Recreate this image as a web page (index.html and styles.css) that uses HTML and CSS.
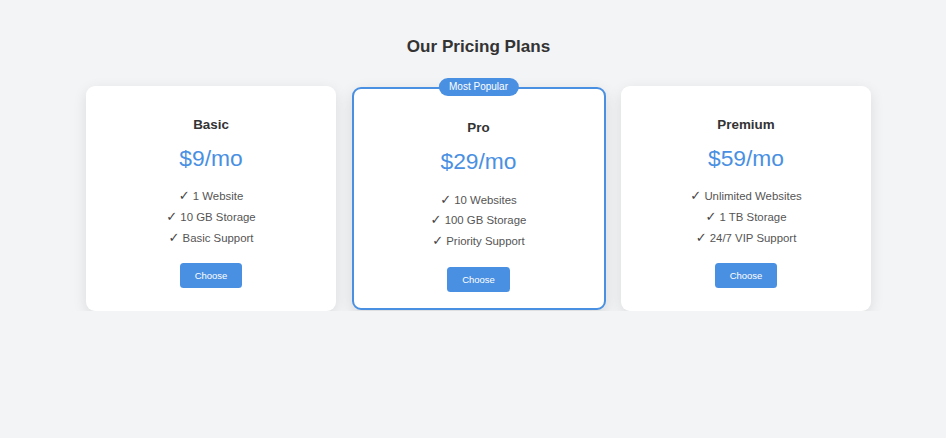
FILE: index.html
```html
<!DOCTYPE html>
<html lang="en">
<head>
  <meta charset="UTF-8">
  <meta name="viewport" content="width=device-width, initial-scale=1.0">
  <title>Our Pricing Plans</title>
  <link rel="stylesheet" href="styles.css">
</head>
<body>

<div class="container">
  <h2>Our Pricing Plans</h2>

  <div class="plans">
    <!-- Basic -->
    <div class="card">
      <h3>Basic</h3>
      <p class="price">$9/mo</p>
      <ul class="features">
        <li><span class="check">✓</span> 1 Website</li>
        <li><span class="check">✓</span> 10 GB Storage</li>
        <li><span class="check">✓</span> Basic Support</li>
      </ul>
      <button class="choose-button">Choose</button>
    </div>

    <!-- Pro -->
    <div class="card popular">
      <span class="badge">Most Popular</span>
      <h3>Pro</h3>
      <p class="price">$29/mo</p>
      <ul class="features">
        <li><span class="check">✓</span> 10 Websites</li>
        <li><span class="check">✓</span> 100 GB Storage</li>
        <li><span class="check">✓</span> Priority Support</li>
      </ul>
      <button class="choose-button">Choose</button>
    </div>

    <!-- Premium -->
    <div class="card">
      <h3>Premium</h3>
      <p class="price">$59/mo</p>
      <ul class="features">
        <li><span class="check">✓</span> Unlimited Websites</li>
        <li><span class="check">✓</span> 1 TB Storage</li>
        <li><span class="check">✓</span> 24/7 VIP Support</li>
      </ul>
      <button class="choose-button">Choose</button>
    </div>
  </div>
</div>

</body>
</html>
```

FILE: styles.css
```css
body {
  font-family: "Liberation Sans", Arial, sans-serif;
  font-size: 11.4px;
  margin: 0;
  padding: 0 0 0 11px;
  background-color: #f3f4f6;
}
.container {
  padding-top: 37.25px;
}
h2 {
  font-size: 17.1px;
  line-height: normal;
  text-align: center;
  color: #333;
  margin: 0 0 29.1px;
}
.plans {
  display: flex;
  justify-content: center;
  align-items: center;
  gap: 15.5px;
}
.card {
  width: 250px;
  box-sizing: border-box;
  background-color: #fff;
  border-radius: 9px;
  padding: 17px 14px 22.2px;
  text-align: center;
  box-shadow: 0 4px 14px rgba(0, 0, 0, 0.1);
}
.card h3 {
  font-size: 13.4px;
  line-height: normal;
  color: #333;
  margin: 13.4px 0;
}
.price {
  font-size: 22.8px;
  line-height: normal;
  color: #4a90e2;
  margin: 0;
}
.features {
  list-style: none;
  padding: 0;
  margin: 14.2px 0 15.25px;
  color: #555;
}
.features li {
  line-height: 20.6px;
}
.check {
  font-family: "DejaVu Sans", sans-serif;
  font-size: 13px;
  color: #444;
  line-height: 1;
}
.choose-button {
  display: block;
  margin: 0 auto;
  height: 25px;
  padding: 0 14.8px;
  font-family: inherit;
  font-size: 9.5px;
  background-color: #4a90e2;
  color: white;
  border: none;
  border-radius: 3.5px;
  cursor: pointer;
}
.choose-button:hover {
  background-color: #357abd;
}
.card.popular {
  position: relative;
  width: 254px;
  border: 2px solid #4a90e2;
  padding-top: 18px;
  padding-bottom: 16.5px;
  box-shadow: 0 5px 16px rgba(0, 0, 0, 0.12);
}
.badge {
  position: absolute;
  top: -11px;
  left: 50%;
  transform: translateX(-50%);
  background-color: #4a90e2;
  color: #fff;
  font-size: 10px;
  line-height: normal;
  padding: 3.6px 10.7px;
  border-radius: 10px;
  white-space: nowrap;
}
```
